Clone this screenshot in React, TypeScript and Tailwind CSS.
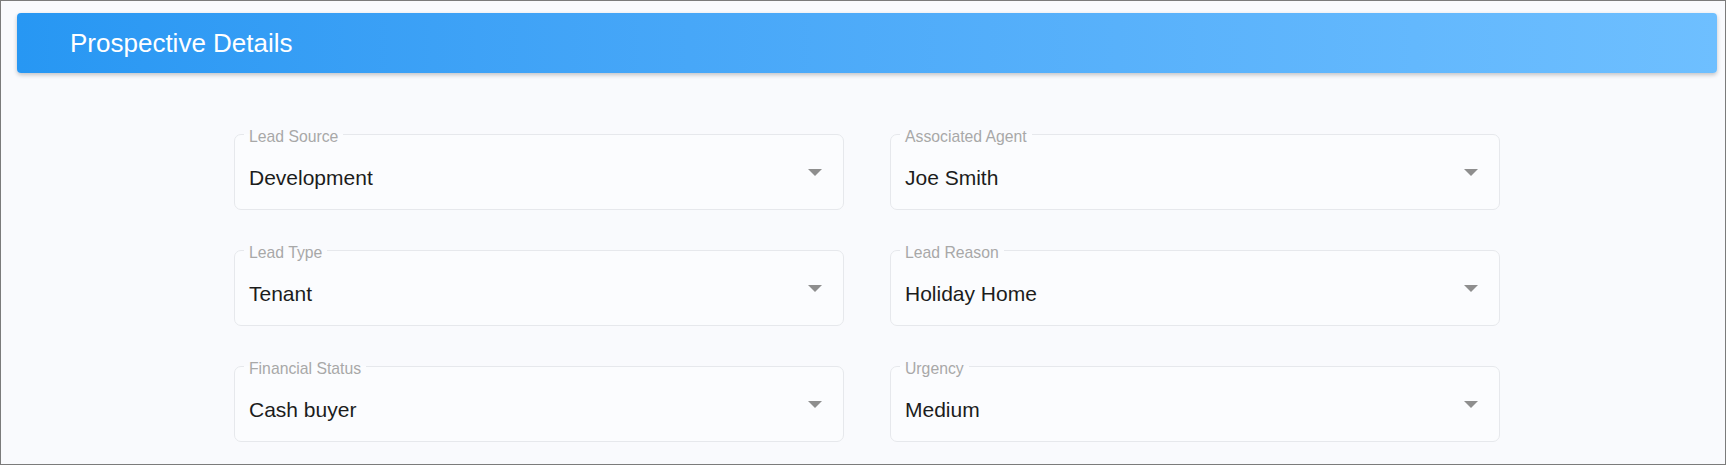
const fields = [
  { label: 'Lead Source', value: 'Development' },
  { label: 'Associated Agent', value: 'Joe Smith' },
  { label: 'Lead Type', value: 'Tenant' },
  { label: 'Lead Reason', value: 'Holiday Home' },
  { label: 'Financial Status', value: 'Cash buyer' },
  { label: 'Urgency', value: 'Medium' },
];

function SelectField({ label, value }: { label: string; value: string }) {
  return (
    <fieldset className="h-[87px] rounded-[7px] border border-[#e6e8ec] bg-[#fbfcfe]">
      <legend className="ml-[9px] px-[5px] pt-[6px] text-[15.75px] leading-[16px] text-[#a8a8a8]">
        {label}
      </legend>
      <div className="flex h-[64px] items-start justify-between pl-[14px] pr-[21px]">
        <span className="mt-[21px] text-[21px] leading-[24px] text-[#1c1c1c]">{value}</span>
        <svg width="14" height="7" viewBox="0 0 14 7" className="mt-[24px]">
          <polygon points="0,0 14,0 7,7" fill="#8e8e8e" />
        </svg>
      </div>
    </fieldset>
  );
}

export default function App() {
  return (
    <div
      className="h-[465px] w-[1726px] overflow-hidden border border-[#7b7b7b] bg-[#f9fafd]"
      style={{ fontFamily: '"Liberation Sans", Arial, sans-serif' }}
    >
      <div className="ml-[16px] mr-[8px] mt-[12px] flex h-[60px] items-center rounded-[4px] bg-linear-to-r from-[#2797f3] to-[#6ebfff] pl-[53px] shadow-[0_2px_4px_rgba(0,0,0,0.22)]">
        <h1 className="text-[26px] text-white">Prospective Details</h1>
      </div>

      <div className="ml-[233px] mt-[50px] grid w-[1266px] grid-cols-2 gap-x-[46px] gap-y-[29px]">
        {fields.map((f) => (
          <SelectField key={f.label} label={f.label} value={f.value} />
        ))}
      </div>
    </div>
  );
}
